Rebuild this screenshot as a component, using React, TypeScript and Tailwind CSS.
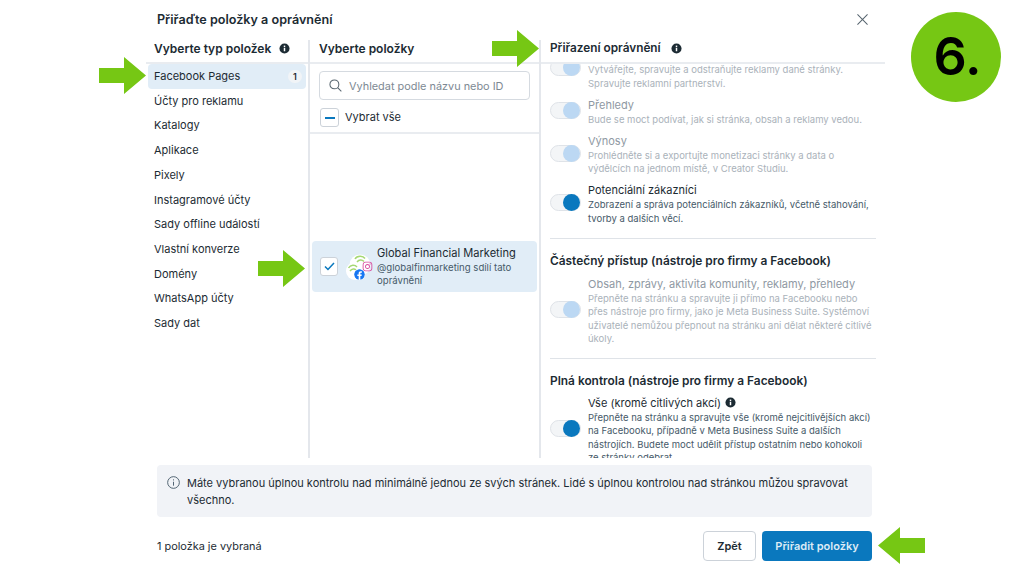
import React from "react";
import { FaFacebook, FaInstagram } from "react-icons/fa";

const itemTypes = [
    "Facebook Pages",
    "Účty pro reklamu",
    "Katalogy",
    "Aplikace",
    "Pixely",
    "Instagramové účty",
    "Sady offline událostí",
    "Vlastní konverze",
    "Domény",
    "WhatsApp účty",
    "Sady dat",
];

const InfoDot = () => (
    <svg viewBox="0 0 12 12" className="h-[11px] w-[11px] shrink-0">
        <circle cx="6" cy="6" r="5.5" fill="#1c2b33" />
        <rect x="5.2" y="5.2" width="1.6" height="3.8" fill="#fff" />
        <rect x="5.2" y="2.8" width="1.6" height="1.6" fill="#fff" />
    </svg>
);

const Arrow = ({ className, flip }: { className: string; flip?: boolean }) => (
    <svg
        viewBox="0 0 47 37"
        className={`absolute h-[37px] w-[47px] ${className}`}
        style={flip ? { transform: "scaleX(-1)" } : undefined}
    >
        <path d="M0 11 H25 V0 L47 18.500 L25 37 V26 H0 Z" fill="#76c714" />
    </svg>
);

const Toggle = ({ on }: { on?: boolean }) => (
    <div className="relative -mt-[2px] h-[17px] w-[31px] shrink-0 rounded-full border border-[#dfe3e8] bg-[#f3f5f7]">
        <div
            className={`absolute right-0 top-[-1px] h-[17px] w-[17px] rounded-full ${
                on ? "bg-[#0a78be]" : "bg-[#bcd8f3]"
            }`}
        />
    </div>
);

const PermissionRow = ({
    name,
    lines,
    on,
    extra,
}: {
    name?: string;
    lines: string[];
    on?: boolean;
    extra?: boolean;
}) => (
    <div className="flex items-center gap-[7px]">
        <Toggle on={on} />
        <div className="min-w-0">
            <div
                className={`flex h-[16px] items-center gap-[4px] whitespace-nowrap text-[11px] leading-[16px] ${
                    on ? "text-[#1c2b33]" : "text-[#8f99a3]"
                }`}
            >
                {name}
                {extra && <InfoDot />}
            </div>
            {lines.map((line) => (
                <div
                    key={line}
                    className={`whitespace-nowrap text-[9.500px] leading-[13.500px] ${
                        on ? "text-[#465a69]" : "text-[#aab2ba]"
                    }`}
                >
                    {line}
                </div>
            ))}
        </div>
    </div>
);

const PageAvatar = () => (
    <div className="relative h-[27px] w-[27px] shrink-0">
        <svg viewBox="0 0 27 27" className="absolute inset-0 h-full w-full" fill="none">
            <circle cx="14" cy="12" r="10.500" fill="#fff" />
            <circle cx="9" cy="18" r="9" fill="#fff" />
            <path d="M9 6 C11 2.500 17 2.500 19 5.500" stroke="#a5d873" strokeWidth="1.500" />
            <path d="M11 9 C13 6.500 16 6.500 18 8.500" stroke="#a5d873" strokeWidth="1.500" />
            <path d="M2.500 15 C4.500 11.500 9 11.500 11 14" stroke="#a5d873" strokeWidth="1.500" />
            <path d="M4 18 C6 15.500 8.500 15.500 10 17" stroke="#a5d873" strokeWidth="1.500" />
        </svg>
        <FaInstagram className="absolute right-[0px] top-[8px] text-[11px] text-[#d6499b]" />
        <FaFacebook className="absolute bottom-[0px] left-[8px] rounded-full bg-white text-[11px] text-[#1877f2]" />
    </div>
);

export default function App() {
    return (
        <div
            className="relative h-[573px] w-[1024px] overflow-hidden bg-white text-[#1c2b33]"
            style={{ fontFamily: "Inter, 'Noto Sans', sans-serif" }}
        >
            <div className="ml-[146px] flex w-[739px] flex-col">
                {/* Title */}
                <div className="flex h-[40px] items-center justify-between pb-[0px] pl-[11px] pr-[17px]">
                    <div className="text-[12.600px] font-semibold">Přiřaďte položky a oprávnění</div>
                    <svg viewBox="0 0 12 12" className="mb-[2px] h-[11px] w-[11px]" stroke="#56646e" strokeWidth="1.100">
                        <path d="M0.500 0.500 L11.500 11.500 M11.500 0.500 L0.500 11.500" />
                    </svg>
                </div>

                {/* Columns */}
                <div className="flex h-[418px]">
                    {/* Item types */}
                    <div className="w-[164px] shrink-0 border-r-2 border-[#e4e7ec]">
                        <div className="flex h-[24px] items-center gap-[8px] border-b-2 border-[#e9ecf0] pb-[5px] pl-[8px] text-[12px] font-semibold">
                            Vyberte typ položek
                            <InfoDot />
                        </div>
                        <div className="pl-[2px] pr-[2px]">
                            {itemTypes.map((item, i) => (
                                <div
                                    key={item}
                                    className={`flex h-[24.700px] items-center justify-between rounded-[4px] pl-[6px] pr-[4px] text-[11px] ${
                                        i === 0 ? "bg-[#e1edf7]" : ""
                                    }`}
                                >
                                    {item}
                                    {i === 0 && (
                                        <span className="flex h-[13px] w-[14px] items-center justify-center rounded-full bg-[#f1f4f7] text-[9px] font-semibold">
                                            1
                                        </span>
                                    )}
                                </div>
                            ))}
                        </div>
                    </div>

                    {/* Items */}
                    <div className="w-[231px] shrink-0 border-r-2 border-[#e4e7ec]">
                        <div className="flex h-[24px] items-center border-b-2 border-[#e9ecf0] pb-[5px] pl-[9px] text-[12px] font-semibold">
                            Vyberte položky
                        </div>
                        <div className="h-[70px] border-b-2 border-[#e9ecf0] px-[9px] pt-[7px]">
                            <div className="flex h-[29px] w-[211px] items-center gap-[7px] rounded-[4px] border border-[#d5dae0] pl-[9px]">
                                <svg viewBox="0 0 14 14" className="h-[13px] w-[13px] shrink-0" fill="none" stroke="#56646e" strokeWidth="1.100">
                                    <circle cx="5.800" cy="5.800" r="4.800" />
                                    <path d="M9.300 9.300 L13.300 13.300" />
                                </svg>
                                <span className="whitespace-nowrap pt-[1px] text-[10.900px] text-[#7d8993]">Vyhledat podle názvu nebo ID</span>
                            </div>
                            <div className="mt-[8px] flex items-center gap-[6px] pl-[1px] text-[11px]">
                                <div className="flex h-[19px] w-[19px] items-center justify-center rounded-[3px] border border-[#ccd2d9]">
                                    <div className="h-[2px] w-[10px] bg-[#0a78be]" />
                                </div>
                                Vybrat vše
                            </div>
                        </div>
                        <div className="mx-[2px] mt-[107px] flex h-[51px] w-[225px] items-center rounded-[4px] bg-[#e1edf7] pl-[8px]">
                            <div className="flex h-[19px] w-[18px] shrink-0 items-center justify-center rounded-[3px] border border-[#ccd2d9] bg-white">
                                <svg viewBox="0 0 12 10" className="h-[9px] w-[11px]" fill="none" stroke="#0a78be" strokeWidth="1.700">
                                    <path d="M1 5 L4.300 8.300 L11 1" />
                                </svg>
                            </div>
                            <div className="ml-[8px]">
                                <PageAvatar />
                            </div>
                            <div className="ml-[4px] min-w-0">
                                <div className="whitespace-nowrap text-[11.100px] leading-[15px]">Global Financial Marketing</div>
                                <div className="text-[9.600px] leading-[13px] text-[#465a69]">
                                    <div className="whitespace-nowrap">@globalfinmarketing sdílí tato</div>
                                    <div>oprávnění</div>
                                </div>
                            </div>
                        </div>
                    </div>

                    {/* Permissions */}
                    <div className="flex min-w-0 flex-1 flex-col">
                        <div className="flex h-[24px] shrink-0 items-center gap-[10px] border-b-2 border-[#e9ecf0] pb-[5px] pl-[9px] text-[11.800px] font-semibold">
                            Přiřazení oprávnění
                            <InfoDot />
                        </div>
                        <div className="min-h-0 flex-1 overflow-hidden pl-[9px] pr-[9px]">
                            {/* list is scrolled: first row sits partly under the header */}
                            <div className="-mt-[17px] flex flex-col gap-[6.500px]">
                                <PermissionRow
                                    lines={[
                                        "Vytvářejte, spravujte a odstraňujte reklamy dané stránky.",
                                        "Spravujte reklamní partnerství.",
                                    ]}
                                />
                                <PermissionRow
                                    name="Přehledy"
                                    lines={["Bude se moct podívat, jak si stránka, obsah a reklamy vedou."]}
                                />
                                <PermissionRow
                                    name="Výnosy"
                                    lines={[
                                        "Prohlédněte si a exportujte monetizaci stránky a data o",
                                        "výdělcích na jednom místě, v Creator Studiu.",
                                    ]}
                                />
                                <PermissionRow
                                    on
                                    name="Potenciální zákazníci"
                                    lines={[
                                        "Zobrazení a správa potenciálních zákazníků, včetně stahování,",
                                        "tvorby a dalších věcí.",
                                    ]}
                                />
                            </div>
                            <div className="mt-[12.500px] border-t border-[#dfe3e8] pt-[13px]">
                                <div className="mb-[6px] whitespace-nowrap text-[11.900px] font-semibold leading-[18px]">
                                    Částečný přístup (nástroje pro firmy a Facebook)
                                </div>
                                <PermissionRow
                                    name="Obsah, zprávy, aktivita komunity, reklamy, přehledy"
                                    lines={[
                                        "Přepněte na stránku a spravujte ji přímo na Facebooku nebo",
                                        "přes nástroje pro firmy, jako je Meta Business Suite. Systémoví",
                                        "uživatelé nemůžou přepnout na stránku ani dělat některé citlivé",
                                        "úkoly.",
                                    ]}
                                />
                            </div>
                            <div className="mt-[12px] border-t border-[#dfe3e8] pt-[13px]">
                                <div className="mb-[5px] whitespace-nowrap text-[11.900px] font-semibold leading-[18px]">
                                    Plná kontrola (nástroje pro firmy a Facebook)
                                </div>
                                <PermissionRow
                                    on
                                    extra
                                    name="Vše (kromě citlivých akcí)"
                                    lines={[
                                        "Přepněte na stránku a spravujte vše (kromě nejcitlivějších akcí)",
                                        "na Facebooku, případně v Meta Business Suite a dalších",
                                        "nástrojích. Budete moct udělit přístup ostatním nebo kohokoli",
                                        "ze stránky odebrat",
                                    ]}
                                />
                            </div>
                        </div>
                    </div>
                </div>

                {/* Notice */}
                <div className="ml-[11px] mt-[7px] flex h-[52px] w-[715px] items-start gap-[7px] rounded-[4px] bg-[#f1f3f7] pl-[10px] pr-[16px] pt-[10px]">
                    <svg viewBox="0 0 14 14" className="mt-[1px] h-[13px] w-[13px] shrink-0" fill="none" stroke="#465a69" strokeWidth="1">
                        <circle cx="7" cy="7" r="6.300" />
                        <path d="M7 6.200 V10.400 M7 3.600 V4.800" />
                    </svg>
                    <div className="text-[11px] leading-[17px]">
                        Máte vybranou úplnou kontrolu nad minimálně jednou ze svých stránek. Lidé s úplnou kontrolou nad stránkou můžou spravovat všechno.
                    </div>
                </div>

                {/* Footer */}
                <div className="ml-[11px] mt-[14px] flex w-[715px] items-center justify-between">
                    <div className="pt-[1px] text-[10.900px]">1 položka je vybraná</div>
                    <div className="flex gap-[6px]">
                        <div className="flex h-[30px] w-[53px] items-center justify-center rounded-[4px] border border-[#ccd2d9] text-[11px] font-semibold">
                            Zpět
                        </div>
                        <div className="flex h-[30px] w-[110px] items-center justify-center rounded-[4px] bg-[#0a78be] text-[11px] font-semibold text-[#dcebf6]">
                            Přiřadit položky
                        </div>
                    </div>
                </div>
            </div>

            {/* Tutorial overlays */}
            <Arrow className="left-[99px] top-[57px]" />
            <Arrow className="left-[492px] top-[30px]" />
            <Arrow className="left-[258px] top-[250px]" />
            <Arrow flip className="left-[878px] top-[527px]" />
            <div className="absolute left-[911px] top-[12px] flex h-[90px] w-[90px] items-center justify-center rounded-full bg-[#76c714] pb-[1px] pl-[3px] text-[52px] font-semibold leading-none text-black">
                6.
            </div>
        </div>
    );
}
